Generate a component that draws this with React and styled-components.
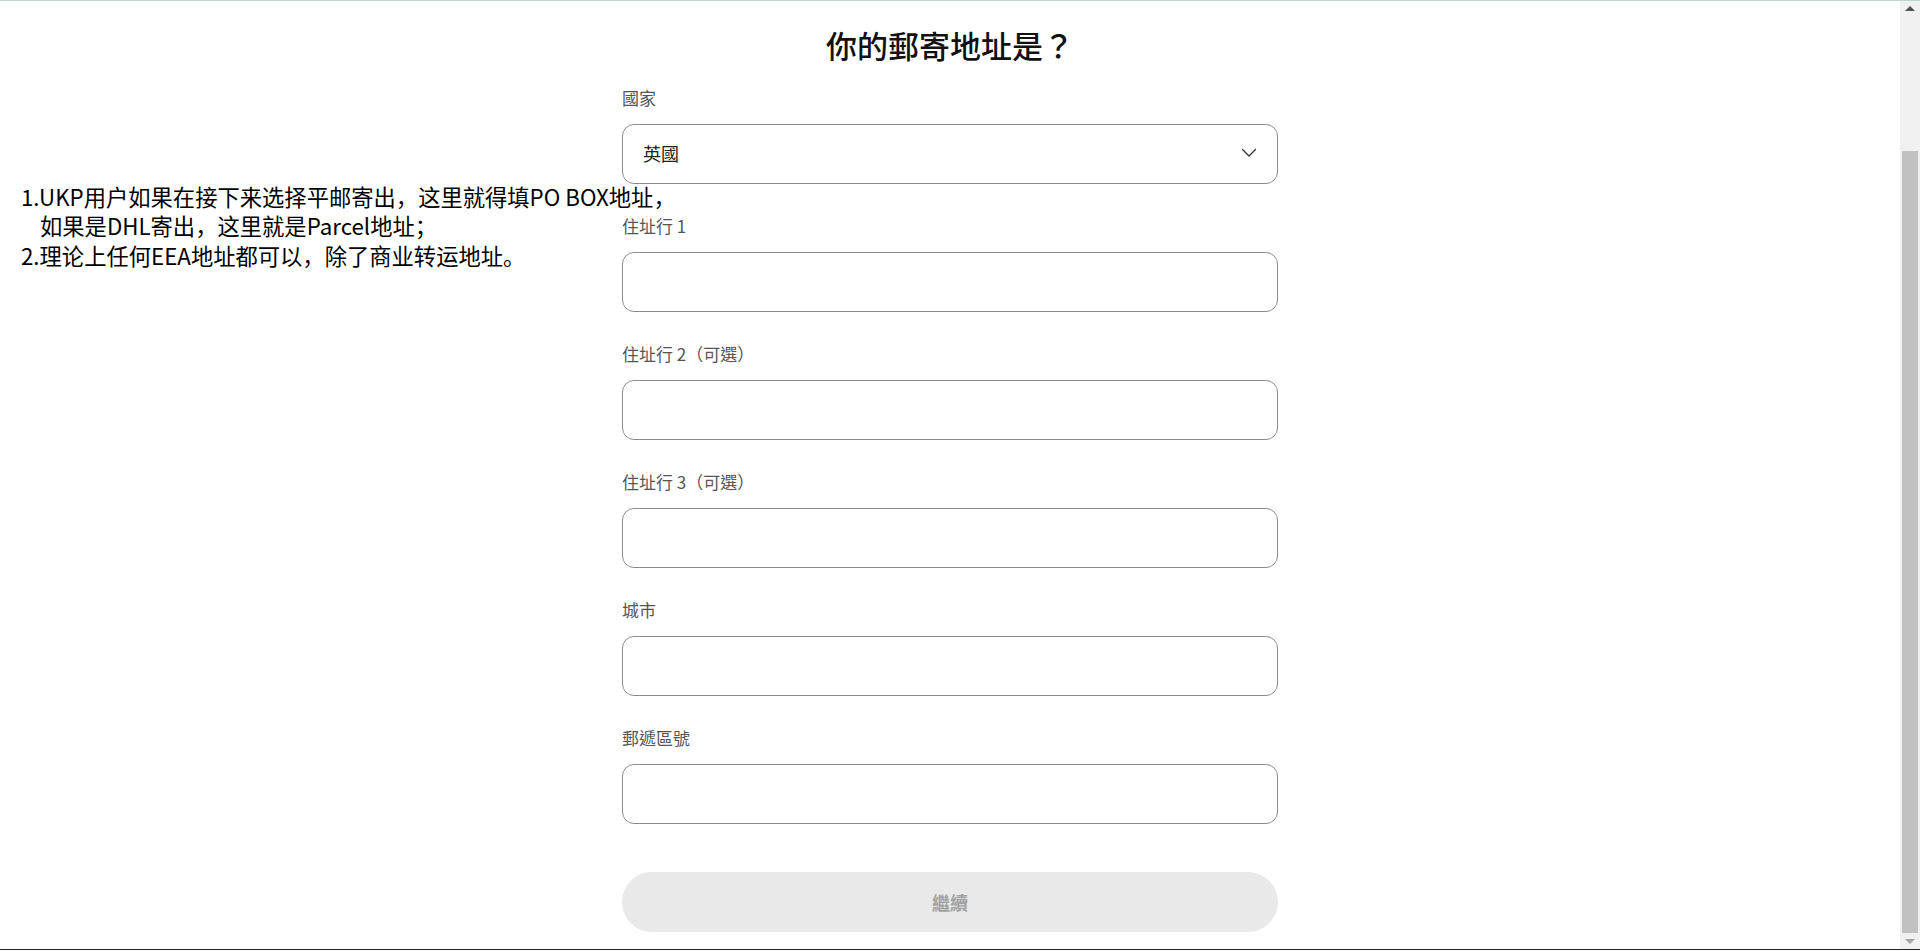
import React from "react";
import styled, { createGlobalStyle } from "styled-components";

const fields = [
  { label: "住址行 1" },
  { label: "住址行 2（可選）" },
  { label: "住址行 3（可選）" },
  { label: "城市" },
  { label: "郵遞區號" },
];

const notes = [
  { text: "1.UKP用户如果在接下来选择平邮寄出，这里就得填PO BOX地址，", indent: false },
  { text: "如果是DHL寄出，这里就是Parcel地址；", indent: true },
  { text: "2.理论上任何EEA地址都可以，除了商业转运地址。", indent: false },
];

function App() {
  return (
    <>
      <GlobalStyle />
      <TopLine />
      <BottomLine />
      <Scrollbar>
        <ArrowUp />
        <Track>
          <Thumb />
        </Track>
        <ArrowDown />
      </Scrollbar>
      <Page>
        <Note>
          {notes.map((n, i) => (
            <NoteLine key={i} indent={n.indent}>
              {n.text}
            </NoteLine>
          ))}
        </Note>
        <Title>你的郵寄地址是？</Title>
        <Form>
          <Field>
            <Label>國家</Label>
            <SelectBox>
              <span>英國</span>
              <svg width="16" height="10" viewBox="0 0 16 10" fill="none">
                <polyline
                  points="1.5,1.5 8,8 14.5,1.5"
                  stroke="#333"
                  strokeWidth="1.3"
                  strokeLinecap="round"
                  strokeLinejoin="round"
                />
              </svg>
            </SelectBox>
          </Field>
          {fields.map((f) => (
            <Field key={f.label}>
              <Label>{f.label}</Label>
              <Input type="text" />
            </Field>
          ))}
          <ContinueButton disabled>繼續</ContinueButton>
        </Form>
      </Page>
    </>
  );
}

export default App;

const GlobalStyle = createGlobalStyle`
  html, body {
    margin: 0;
    padding: 0;
    background: #ffffff;
    overflow: hidden;
  }
  body {
    font-family: "Noto Sans CJK TC", "Noto Sans", sans-serif;
    color: #222;
  }
  * {
    box-sizing: border-box;
  }
`;

const TopLine = styled.div`
  position: fixed;
  top: 0;
  left: 0;
  right: 0;
  height: 1px;
  background: #bcd3ce;
  z-index: 10;
`;

const BottomLine = styled.div`
  position: fixed;
  bottom: 1px;
  left: 0;
  right: 0;
  height: 1px;
  background: #222;
  z-index: 10;
`;

const Scrollbar = styled.div`
  position: fixed;
  top: 1px;
  right: 0;
  bottom: 2px;
  width: 20px;
  background: #f0f0f0;
  display: flex;
  flex-direction: column;
  align-items: center;
  z-index: 5;
`;

const ArrowUp = styled.div`
  margin-top: 5px;
  width: 0;
  height: 0;
  border-left: 5px solid transparent;
  border-right: 5px solid transparent;
  border-bottom: 5px solid #505050;
`;

const ArrowDown = styled.div`
  margin-bottom: 5px;
  width: 0;
  height: 0;
  border-left: 5px solid transparent;
  border-right: 5px solid transparent;
  border-top: 5px solid #a3a3a3;
`;

const Track = styled.div`
  flex: 1;
  width: 100%;
  padding: 140px 2px 6px;
  display: flex;
`;

const Thumb = styled.div`
  flex: 1;
  background: #c1c1c1;
`;

const Page = styled.main`
  position: relative;
  margin-right: 20px;
  display: flex;
  flex-direction: column;
  align-items: center;
  padding: 24px 0 0;
`;

const Note = styled.div`
  position: absolute;
  top: 182px;
  left: 21px;
  font-family: "Noto Sans CJK SC", "Noto Sans", sans-serif;
  font-size: 22.3px;
  line-height: 29.4px;
  color: #000;
  z-index: 2;
`;

const NoteLine = styled.div`
  padding-left: ${(props) => (props.indent ? "19px" : "0")};
  white-space: nowrap;
`;

const Title = styled.h1`
  margin: 0;
  font-size: 31px;
  line-height: 42px;
  font-weight: 500;
  color: #111;
`;

const Form = styled.div`
  width: 656px;
  margin-top: 20px;
  display: flex;
  flex-direction: column;
`;

const Field = styled.div`
  display: flex;
  flex-direction: column;
  margin-bottom: 30px;
`;

const Label = styled.label`
  font-size: 17px;
  line-height: 24px;
  color: #555;
  margin-bottom: 14px;
`;

const SelectBox = styled.div`
  height: 60px;
  border: 1px solid #8c8c8c;
  border-radius: 12px;
  padding: 0 20px 2px 20px;
  display: flex;
  align-items: center;
  justify-content: space-between;
  font-size: 18px;
  color: #222;
`;

const Input = styled.input`
  height: 60px;
  width: 100%;
  border: 1px solid #8c8c8c;
  border-radius: 12px;
  padding: 0 20px;
  font-size: 18px;
  font-family: inherit;
  outline: none;
  background: #fff;
`;

const ContinueButton = styled.button`
  margin-top: 18px;
  height: 60px;
  width: 100%;
  border: none;
  border-radius: 30px;
  background: #e9e9e9;
  color: #a2a2a2;
  font-family: inherit;
  font-size: 18px;
  font-weight: 700;
`;
